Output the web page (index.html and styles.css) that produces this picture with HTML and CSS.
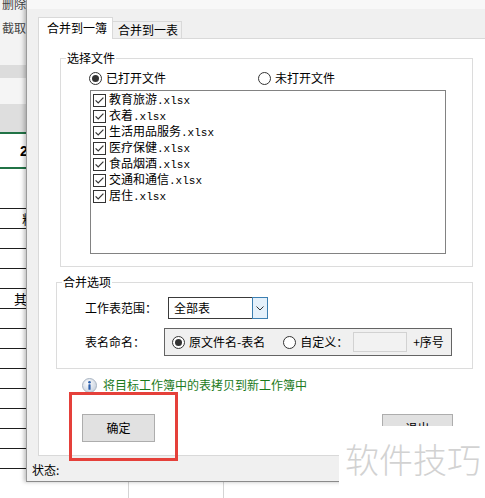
FILE: index.html
```html
<!DOCTYPE html>
<html lang="zh-CN">
<head>
<meta charset="utf-8">
<title>合并工作簿</title>
<link rel="stylesheet" href="styles.css">
</head>
<body>
<div class="screen">
  <div class="sheet-left">
    <div class="rib">
      <div class="rib-txt first">删除</div>
      <div class="rib-txt">截取</div>
    </div>
    <div class="band1"></div>
    <div class="band2"></div>
    <div class="band3"></div>
    <div class="hdr-row"><span class="bold-num">2</span></div>
    <div class="spacer"></div>
    <div class="cell"><span class="ct c1">粮</span></div>
    <div class="cell"></div>
    <div class="cell"></div>
    <div class="cell"></div>
    <div class="cell"><span class="ct c2">其</span></div>
    <div class="cell"></div>
    <div class="cell"></div>
    <div class="cell"></div>
    <div class="cell"></div>
    <div class="cell"></div>
    <div class="cell"></div>
    <div class="cell"></div>
    <div class="cell"></div>
    <div class="cell"></div>
  </div>

  <div class="dialog">
    <div class="dlg-top"></div>
    <div class="tabs">
      <div class="tab active">合并到一簿</div>
      <div class="tab">合并到一表</div>
    </div>
    <div class="panel">
      <fieldset class="group g1">
        <legend>选择文件</legend>
        <div class="gbody">
          <div class="radio-row">
            <div class="opt opt1"><span class="radio on"></span><span>已打开文件</span></div>
            <div class="opt"><span class="radio"></span><span>未打开文件</span></div>
          </div>
          <div class="list">
            <div class="item"><svg class="cb" width="13" height="13" viewBox="0 0 13 13"><rect x="0.5" y="0.5" width="12" height="12" fill="#fff" stroke="#333"/><path d="M2.6 6.4 L5.2 9 L10.4 3.6" fill="none" stroke="#333" stroke-width="1.2"/></svg><span>教育旅游<span class="ext">.xlsx</span></span></div>
            <div class="item"><svg class="cb" width="13" height="13" viewBox="0 0 13 13"><rect x="0.5" y="0.5" width="12" height="12" fill="#fff" stroke="#333"/><path d="M2.6 6.4 L5.2 9 L10.4 3.6" fill="none" stroke="#333" stroke-width="1.2"/></svg><span>衣着<span class="ext">.xlsx</span></span></div>
            <div class="item"><svg class="cb" width="13" height="13" viewBox="0 0 13 13"><rect x="0.5" y="0.5" width="12" height="12" fill="#fff" stroke="#333"/><path d="M2.6 6.4 L5.2 9 L10.4 3.6" fill="none" stroke="#333" stroke-width="1.2"/></svg><span>生活用品服务<span class="ext">.xlsx</span></span></div>
            <div class="item"><svg class="cb" width="13" height="13" viewBox="0 0 13 13"><rect x="0.5" y="0.5" width="12" height="12" fill="#fff" stroke="#333"/><path d="M2.6 6.4 L5.2 9 L10.4 3.6" fill="none" stroke="#333" stroke-width="1.2"/></svg><span>医疗保健<span class="ext">.xlsx</span></span></div>
            <div class="item"><svg class="cb" width="13" height="13" viewBox="0 0 13 13"><rect x="0.5" y="0.5" width="12" height="12" fill="#fff" stroke="#333"/><path d="M2.6 6.4 L5.2 9 L10.4 3.6" fill="none" stroke="#333" stroke-width="1.2"/></svg><span>食品烟酒<span class="ext">.xlsx</span></span></div>
            <div class="item"><svg class="cb" width="13" height="13" viewBox="0 0 13 13"><rect x="0.5" y="0.5" width="12" height="12" fill="#fff" stroke="#333"/><path d="M2.6 6.4 L5.2 9 L10.4 3.6" fill="none" stroke="#333" stroke-width="1.2"/></svg><span>交通和通信<span class="ext">.xlsx</span></span></div>
            <div class="item"><svg class="cb" width="13" height="13" viewBox="0 0 13 13"><rect x="0.5" y="0.5" width="12" height="12" fill="#fff" stroke="#333"/><path d="M2.6 6.4 L5.2 9 L10.4 3.6" fill="none" stroke="#333" stroke-width="1.2"/></svg><span>居住<span class="ext">.xlsx</span></span></div>
          </div>
        </div>
      </fieldset>

      <fieldset class="group g2">
        <legend>合并选项</legend>
        <div class="gbody">
          <div class="row row1">
            <span class="lbl lbl1">工作表范围：</span>
            <div class="combo">
              <span class="combo-text">全部表</span>
              <span class="combo-btn"><svg width="8" height="5" viewBox="0 0 8 5"><path d="M0.5 0.5 L4 4 L7.5 0.5" fill="none" stroke="#333"/></svg></span>
            </div>
          </div>
          <div class="row row2">
            <span class="lbl lbl2">表名命名：</span>
            <div class="radio-box">
              <span class="radio on"></span><span class="rtxt">原文件名-表名</span>
              <span class="radio r2"></span><span class="rtxt">自定义：</span>
              <span class="input"></span>
              <span class="suffix">+序号</span>
            </div>
          </div>
        </div>
      </fieldset>

      <div class="info">
        <svg width="15" height="15" viewBox="0 0 15 15"><defs><radialGradient id="ig" cx="40%" cy="35%" r="70%"><stop offset="0" stop-color="#ffffff"/><stop offset="1" stop-color="#c5cfdc"/></radialGradient></defs><circle cx="7.5" cy="7.5" r="7" fill="url(#ig)" stroke="#a9b4c2"/><circle cx="7.5" cy="4.2" r="1.3" fill="#2b5fae"/><rect x="6.4" y="6.2" width="2.2" height="5.6" rx="0.6" fill="#2b5fae"/></svg>
        <span class="info-text">将目标工作簿中的表拷贝到新工作簿中</span>
      </div>

      <div class="buttons">
        <div class="btn ok">确定</div>
        <div class="btn quit">退出</div>
      </div>
    </div>
    <div class="status">状态:</div>
    <div class="highlight"></div>
  </div>

  <div class="sheet-bottom">
    <div class="seg seg1"></div>
    <div class="seg seg2"></div>
    <div class="seg seg3"></div>
  </div>

  <div class="watermark">软件技巧</div>
</div>
</body>
</html>
```

FILE: styles.css
```css
* { box-sizing: border-box; }
html, body { margin: 0; padding: 0; }
body {
  width: 485px;
  height: 498px;
  overflow: hidden;
  background: #fff;
  font-family: "Noto Sans CJK SC", "Noto Sans", sans-serif;
  font-size: 12px;
  color: #000;
}
.screen {
  position: relative;
  display: grid;
  grid-template-columns: 26px 459px;
  grid-template-rows: 482px 16px;
  width: 485px;
  height: 498px;
}

/* spreadsheet behind the dialog */
.sheet-left { overflow: hidden; background: #fff; }
.rib { height: 65px; background: #f3f3f3; overflow: hidden; }
.rib-txt { height: 18px; line-height: 18px; padding-left: 2px; color: #444; white-space: nowrap; font-size: 12px; }
.rib-txt.first { margin-top: -5px; }
.rib-txt + .rib-txt { margin-top: 6px; }
.band1 { height: 13px; background: #dcdcdc; }
.band2 { height: 26px; background: #f5f5f5; }
.band3 { height: 28px; background: #dedede; }
.hdr-row {
  height: 37px;
  border-top: 2px solid #217346;
  border-bottom: 2px solid #217346;
  line-height: 33px;
  white-space: nowrap;
  overflow: hidden;
}
.bold-num { font-family: "Liberation Sans", sans-serif; font-weight: bold; font-size: 14px; padding-left: 20px; }
.spacer { height: 39px; }
.cell { height: 20px; border-top: 1px solid #1e1e1e; white-space: nowrap; overflow: hidden; line-height: 19px; font-size: 13px; }
.ct { display: inline-block; }
.c1 { padding-left: 22px; }
.c2 { padding-left: 14px; }

/* dialog */
.dialog {
  position: relative;
  z-index: 1;
  display: flex;
  flex-direction: column;
  background: #f0f0f0;
  border-left: 1px solid #9a9a9a;
  border-bottom: 1px solid #8a8a8a;
  box-shadow: -2px 0 4px rgba(0, 0, 0, 0.25);
}
.dlg-top { height: 9px; background: #f8f8f8; }
.tabs { height: 29px; display: flex; align-items: flex-end; padding-left: 11px; }
.tab {
  height: 17px;
  width: 69px;
  padding-left: 5px;
  line-height: 15px;
  background: #f0f0f0;
  border: 1px solid #d9d9d9;
  border-left: none;
  border-bottom: none;
  white-space: nowrap;
}
.tab.active {
  position: relative;
  z-index: 2;
  height: 22px;
  width: 75px;
  margin-bottom: -1px;
  padding-left: 8px;
  line-height: 20px;
  background: #fff;
  border-left: 1px solid #d9d9d9;
}
.panel {
  position: relative;
  z-index: 1;
  height: 418px;
  margin-left: 11px;
  background: #fff;
  border: 1px solid #d9d9d9;
  border-right: none;
}

.group { margin: 0; padding: 0; min-width: 0; border: 1px solid #dcdcdc; }
.group legend { margin-left: 5px; padding: 0 1px; height: 16px; line-height: 16px; font-size: 12px; }
.g1 { margin: 11px 0 0 21px; width: 413px; }
.g1 .gbody { padding: 4px 0 12px 28px; }
.radio-row { display: flex; align-items: center; height: 16px; }
.opt { display: flex; align-items: center; gap: 4px; line-height: 16px; }
.opt1 { width: 169px; }
.radio {
  flex: none;
  display: inline-flex;
  align-items: center;
  justify-content: center;
  width: 13px;
  height: 13px;
  border: 1px solid #333;
  border-radius: 50%;
  background: #fff;
}
.radio.on::after { content: ""; width: 7px; height: 7px; border-radius: 50%; background: #333; }
.list {
  margin: 4px 0 0 1px;
  width: 356px;
  height: 164px;
  padding: 1px 0 0 2px;
  background: #fff;
  border: 1px solid #828282;
}
.item { display: flex; align-items: center; gap: 3px; height: 16px; line-height: 16px; white-space: nowrap; }
.cb { flex: none; display: block; }
.ext { font-family: "Liberation Mono", monospace; font-size: 11px; }

.g2 { margin: 7px 0 0 17px; width: 417px; }
.g2 .gbody { padding: 7px 0 12px 28px; }
.row { display: flex; align-items: center; }
.row1 { height: 22px; }
.row2 { height: 28px; margin-top: 9px; }
.lbl { flex: none; line-height: 16px; white-space: nowrap; }
.lbl1 { width: 83px; }
.lbl2 { width: 79px; }
.combo { display: flex; width: 100px; height: 22px; }
.combo-text {
  flex: 1;
  padding-left: 5px;
  line-height: 20px;
  border: 1px solid #3a3a3a;
  border-right: none;
  background: #fff;
}
.combo-btn {
  display: flex;
  align-items: center;
  justify-content: center;
  width: 16px;
  background: #e5f1fb;
  border: 1px solid #3c7fb1;
}
.radio-box {
  display: flex;
  align-items: center;
  width: 288px;
  height: 28px;
  padding-left: 7px;
  background: #f0f0f0;
  border: 1px solid #646464;
  white-space: nowrap;
}
.rtxt { margin-left: 4px; line-height: 16px; }
.radio.r2 { margin-left: 18px; }
.input { width: 54px; height: 20px; margin-left: 5px; background: #f2f2f2; border: 1px solid #d2d2d2; }
.suffix { margin-left: 6px; line-height: 16px; }

.info { display: flex; align-items: center; gap: 6px; height: 16px; margin: 8px 0 0 43px; }
.info svg { flex: none; display: block; }
.info-text { color: #1b7a1b; line-height: 16px; white-space: nowrap; }

.buttons { display: flex; margin: 21px 0 0 43px; }
.btn {
  height: 28px;
  line-height: 26px;
  text-align: center;
  background: #e1e1e1;
  border: 1px solid #adadad;
}
.btn.ok { width: 73px; }
.btn.quit { width: 71px; margin-left: 227px; }

.status { height: 25px; padding: 3px 0 0 5px; line-height: 22px; }

.highlight {
  position: absolute;
  left: 42px;
  top: 392px;
  width: 109px;
  height: 69px;
  border: 3px solid #e5403a;
  z-index: 3;
}

.sheet-bottom { grid-column: 1 / 3; display: flex; background: #fff; }
.seg1 { width: 128px; }
.seg2 { width: 95px; border-left: 1px solid #d4d4d4; }
.seg3 { flex: 1; border-left: 1px solid #d4d4d4; }

.watermark {
  position: absolute;
  left: 339px;
  top: 426px;
  width: 146px;
  height: 72px;
  z-index: 4;
  padding: 16px 0 0 6px;
  background: #fff;
  color: #d2d2d2;
  font-size: 34px;
  line-height: 34px;
  font-weight: 300;
  white-space: nowrap;
}
```
